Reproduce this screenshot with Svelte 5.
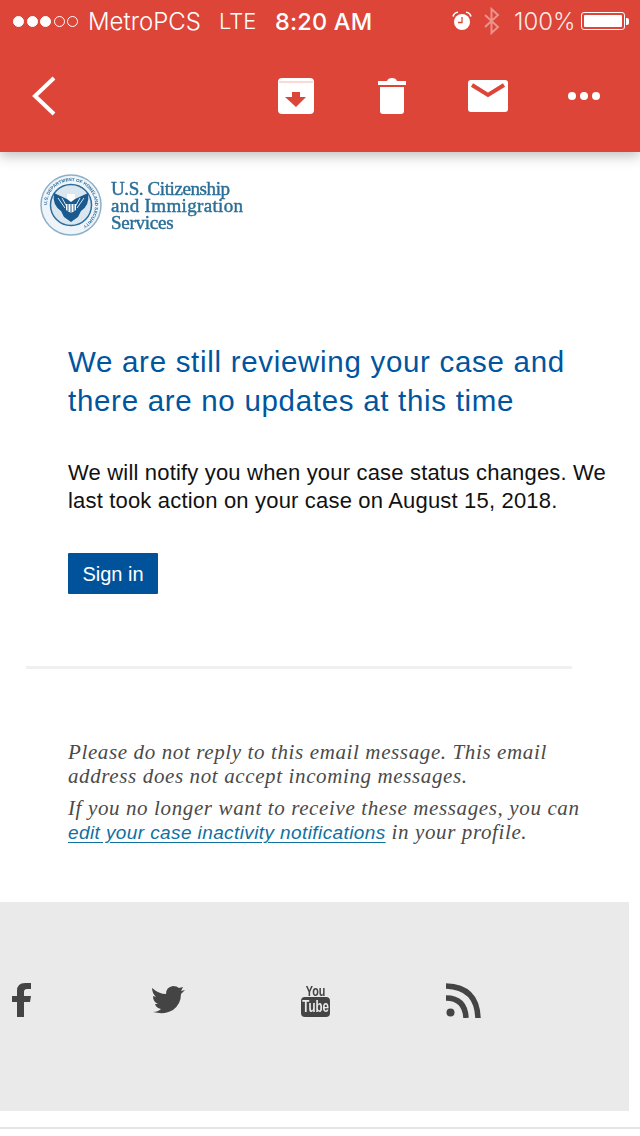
<script>
  const signal = [true, true, true, false, false];
</script>

<div class="page">
  <header class="appbar">
    <div class="status">
      <div class="signal">
        {#each signal as on}
          <span class="dot" class:on></span>
        {/each}
      </div>
      <span class="carrier">MetroPCS</span>
      <span class="net">LTE</span>
      <span class="time">8:20 AM</span>
      <svg class="alarm" width="20" height="20" viewBox="0 0 20 20">
        <circle cx="10" cy="11" r="8" fill="#fff" />
        <path d="M10 6v5.5H6" fill="none" stroke="#dd4539" stroke-width="1.3" />
        <path d="M1 5.5Q2 1.500 6 1.200M19 5.5Q18 1.500 14 1.200" fill="none" stroke="#fff" stroke-width="1.6" />
      </svg>
      <svg class="bt" width="16" height="28" viewBox="0 0 16 28">
        <path d="M1 8l13 12-6.500 6V2L14 8 1 20" fill="none" stroke="#fff" stroke-opacity=".42" stroke-width="2" />
      </svg>
      <span class="pct">100%</span>
      <div class="battery"><span class="charge"></span></div>
      <span class="nub"></span>
    </div>
    <nav class="actions">
      <svg class="back" width="26" height="40" viewBox="0 0 26 40">
        <path d="M23 2L4 20l19 18" fill="none" stroke="#fff" stroke-width="4" />
      </svg>
      <svg class="archive" width="36" height="36" viewBox="0 0 36 36">
        <path d="M4 0h28a4 4 0 0 1 4 4v28a4 4 0 0 1-4 4H4a4 4 0 0 1-4-4V4a4 4 0 0 1 4-4z" fill="#fff" />
        <path d="M1 4h34" stroke="#f3b5af" stroke-width="1" />
        <path d="M14 14h8v5h6L18 29 7 19h7z" fill="#dd4539" />
      </svg>
      <svg class="trash" width="28" height="36" viewBox="0 0 28 36">
        <path d="M0 3h9Q10 0 14 0t5 3h9v4H0zM2 9h24v24a3 3 0 0 1-3 3H5a3 3 0 0 1-3-3z" fill="#fff" />
      </svg>
      <svg class="mail" width="40" height="32" viewBox="0 0 40 32">
        <rect width="40" height="32" rx="3" fill="#fff" />
        <path d="M4 5l16 10L36 5" fill="none" stroke="#dd4539" stroke-width="4" />
      </svg>
      <div class="more"><span></span><span></span><span></span></div>
    </nav>
  </header>

  <main class="mail-body">
    <div class="logo">
      <svg class="seal" width="62" height="62" viewBox="0 0 62 62">
        <circle cx="31" cy="31" r="30" fill="#eef4f8" stroke="#8db0ca" stroke-width="1.500" />
        <circle cx="31" cy="31" r="20.500" fill="#dbe7f0" stroke="#2d6d9e" stroke-width="1.500" />
        <path id="sealarc" d="M7 31a24 24 0 0 1 48 0a24 24 0 0 1-48 0" fill="none" />
        <text class="seal-text"><textPath href="#sealarc">U.S. DEPARTMENT OF HOMELAND SECURITY</textPath></text>
        <path d="M14 19l13 6 4-4 4 4 13-6q2 12-7 18l-3 6-7 5-7-5-3-6q-9-6-7-18z" fill="#1b5a8f" />
        <path d="M18 24l7 10M22 24l5 9M44 24l-7 10M40 24l-5 9" stroke="#dbe7f0" stroke-width="1" />
        <path d="M27 20h8v5l-4 3-4-3z" fill="#fff" />
        <path d="M26 30h10v6l-5 3-5-3z" fill="#fff" />
        <path d="M28 30v7M31 30v9M34 30v7" stroke="#1b5a8f" stroke-width="1" />
      </svg>
      <div class="agency">
        <span class="line-a">U.S. Citizenship</span>
        <span class="line-b">and Immigration</span>
        <span class="line-c">Services</span>
      </div>
    </div>

    <section class="message">
      <h1>We are still reviewing your case and there are no updates at this time</h1>
      <p>We will notify you when your case status changes. We last took action on your case on August 15, 2018.</p>
      <button type="button" class="signin">Sign in</button>
    </section>

    <hr class="rule" />

    <section class="notes">
      <p>Please do not reply to this email message. This email address does not accept incoming messages.</p>
      <p>If you no longer want to receive these messages, you can <a href="#edit">edit your case inactivity notifications</a> in your profile.</p>
    </section>

    <footer class="social">
      <svg class="fb" width="21" height="34" viewBox="0 0 21 34">
        <path d="M6 34V19H1v-6h5V8q0-8 8-8h6v6h-4q-3 0-3 3v4h7l-1 6h-6v15z" fill="#444" />
      </svg>
      <svg class="tw" width="35" height="30" viewBox="0 0 35 30">
        <path d="M0 3q7 6 14 6 0-7 7-8 4 0 6 2l4-1-2 4 4-1-4 4q0 10-8 16-8 5-20 2 5 0 8-3-5-1-6-5h3Q1 17 1 11l3 1Q0 8 0 3z" fill="#444" />
      </svg>
      <div class="yt">
        <span class="you">You</span>
        <span class="tube"><span class="tube-label">Tube</span></span>
      </div>
      <svg class="rss" width="36" height="35" viewBox="0 0 36 35">
        <circle cx="4.500" cy="29.500" r="4" fill="#444" />
        <path d="M0 15q19 0 20 20M0 3q31 1 32 32" fill="none" stroke="#444" stroke-width="5.500" />
      </svg>
    </footer>
    <div class="endline"></div>
  </main>
</div>

<style>
  :global(body) {
    margin: 0;
    background: #fff;
  }

  .page {
    width: 640px;
    height: 1136px;
    overflow: hidden;
    font-family: "Liberation Sans", Arial, sans-serif;
  }

  /* red app bar */
  .appbar {
    position: relative;
    height: 152px;
    box-sizing: border-box;
    background: #dd4539;
    box-shadow: 0 4px 12px rgba(0, 0, 0, 0.25);
    color: #fff;
  }

  .status {
    display: flex;
    align-items: center;
    height: 42px;
    padding-left: 13px;
    font-family: Inter, "Liberation Sans", sans-serif;
    font-size: 24px;
    font-weight: 300;
  }

  .signal {
    display: flex;
    gap: 2.500px;
    margin-right: 10px;
  }
  .dot {
    width: 9px;
    height: 9px;
    border: 1px solid #fff;
    border-radius: 50%;
  }
  .dot.on {
    background: #fff;
  }
  .carrier {
    width: 113px;
    margin-right: 18px;
  }
  .net {
    width: 38px;
    margin-right: 18px;
    font-size: 22px;
  }
  .time {
    width: 158px;
    font-size: 23.500px;
    font-weight: 500;
    letter-spacing: 0.2px;
    margin-right: 19px;
  }
  .alarm {
    margin-right: 12px;
  }
  .bt {
    margin-right: 14px;
  }
  .pct {
    width: 61px;
    margin-right: 6px;
    color: rgba(255, 255, 255, 0.9);
  }
  .battery {
    width: 44px;
    height: 18px;
    padding: 2px;
    border: 1px solid #fff;
    border-radius: 3px;
    box-sizing: border-box;
    display: flex;
  }
  .charge {
    flex: 1;
    background: #fff;
    border-radius: 1px;
  }
  .nub {
    width: 3px;
    height: 7px;
    margin-left: 1px;
    background: #fff;
    border-radius: 0 2px 2px 0;
  }

  .actions {
    display: flex;
    align-items: center;
    height: 108px;
    padding-left: 31px;
  }
  .back {
    margin-right: 221px;
  }
  .archive {
    margin-right: 64px;
  }
  .trash {
    margin-right: 62px;
  }
  .mail {
    margin-right: 60px;
  }
  .more {
    display: flex;
    gap: 4px;
  }
  .more span {
    width: 8px;
    height: 8px;
    border-radius: 50%;
    background: #fff;
  }

  /* logo row */
  .logo {
    display: flex;
    align-items: center;
    gap: 9px;
    padding: 22px 0 0 40px;
  }
  .seal {
    filter: blur(0.4px);
  }
  .seal-text {
    font-family: "Liberation Sans", sans-serif;
    font-size: 4.500px;
    font-weight: 700;
    fill: #2d6d9e;
  }
  .agency {
    font-family: "Liberation Serif", serif;
    font-size: 19px;
    font-weight: 400;
    color: #2b6f98;
    -webkit-text-stroke: 0.45px #2b6f98;
    filter: blur(0.3px);
  }
  .agency span {
    display: block;
    height: 17px;
    line-height: 17px;
    white-space: nowrap;
  }
  .line-a {
    letter-spacing: -0.4px;
  }
  .line-b {
    letter-spacing: 0.35px;
  }
  .line-c {
    letter-spacing: -0.25px;
  }

  /* message */
  .message {
    padding: 106px 0 0 68px;
  }
  h1 {
    margin: 0;
    width: 530px;
    font-size: 29.500px;
    font-weight: 400;
    line-height: 39px;
    color: #00559f;
    letter-spacing: 0.7px;
  }
  .message p {
    margin: 39px 0 0;
    width: 550px;
    font-size: 22px;
    line-height: 28px;
    color: #111;
    letter-spacing: 0.18px;
  }
  .signin {
    display: block;
    width: 90px;
    height: 41px;
    margin-top: 38px;
    padding: 2px 0 0;
    border: none;
    border-radius: 1px;
    background: #00539b;
    color: #fff;
    font-family: inherit;
    font-size: 20px;
  }

  .rule {
    width: 546px;
    height: 3px;
    margin: 72px 0 0 26px;
    border: none;
    background: #f0f0f0;
  }

  .notes {
    padding: 71px 0 0 68px;
    width: 530px;
    font-family: "Liberation Serif", serif;
    font-style: italic;
    font-size: 21px;
    line-height: 24px;
    color: #4a4a4a;
    letter-spacing: 0.62px;
  }
  .notes p {
    margin: 0 0 8px;
  }
  .notes a {
    font-family: "Liberation Sans", sans-serif;
    font-size: 19px;
    line-height: 1;
    color: #10709f;
    letter-spacing: 0.4px;
    text-decoration: underline;
    text-underline-offset: 3px;
  }

  /* grey footer with the social icons */
  .social {
    display: flex;
    align-items: flex-start;
    gap: 116px;
    width: 629px;
    height: 209px;
    box-sizing: border-box;
    margin-top: 58px;
    padding: 81px 0 0 11px;
    background: #eaeaea;
  }
  .fb {
    margin-right: 2px;
  }
  .tw {
    margin-top: 2px;
    margin-left: 2px;
  }
  .yt {
    display: flex;
    flex-direction: column;
    align-items: center;
    width: 29px;
    margin-left: -2px;
    color: #444;
    font-family: "Liberation Sans", sans-serif;
    font-weight: 700;
    line-height: 1;
  }
  .you {
    font-size: 15px;
    height: 14px;
    transform: scaleX(0.72);
  }
  .tube {
    display: flex;
    justify-content: center;
    width: 29px;
    height: 20px;
    margin-top: 0;
    border-radius: 4px;
    background: #444;
    color: #eaeaea;
    font-size: 17px;
    line-height: 20px;
  }
  .tube-label {
    display: inline-block;
    transform: scaleX(0.68);
  }

  .endline {
    height: 2px;
    margin-top: 16px;
    background: #e4e4e4;
  }
</style>
